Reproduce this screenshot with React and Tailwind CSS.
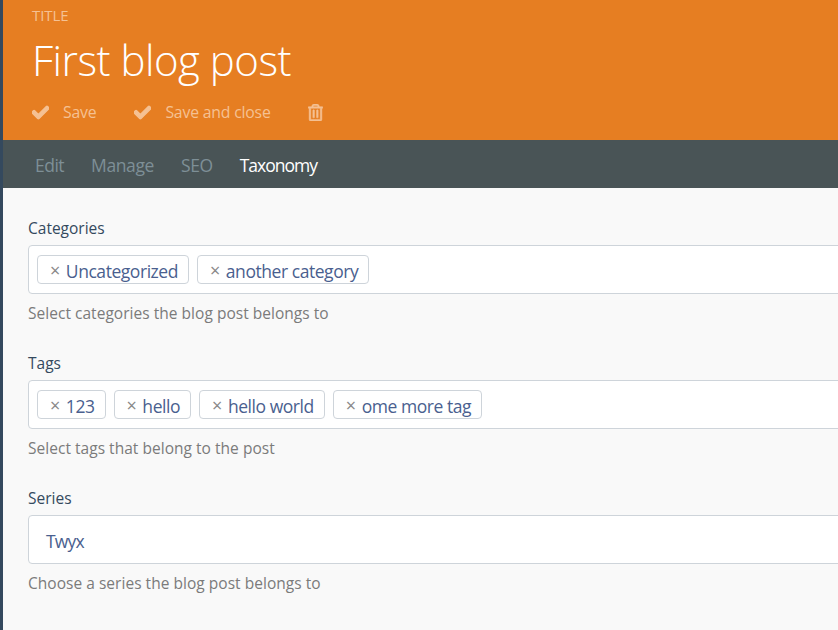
import React from 'react';
import { FaCheck, FaRegTrashAlt } from 'react-icons/fa';

const sans = { fontFamily: '"Open Sans", "Noto Sans", sans-serif' };

function Tag({ children }) {
  return (
    <span className="flex h-[29px] items-center rounded-[4px] border border-[#ced4da] bg-white pl-[12px] pr-[10px] text-[17.5px] tracking-[-0.45px] text-[#4a5f8f]">
      <span className="mr-[6px] pt-[1px] text-[18px] leading-none text-[#888888]">×</span>
      <span className="pt-[3px]">{children}</span>
    </span>
  );
}

function Field({ label, help, children, className }) {
  return (
    <div className={className}>
      <div className="h-[17px] text-[15.5px] leading-[17px] text-[#34495e]">{label}</div>
      <div className="mt-[8px] flex h-[49px] w-[830px] items-center gap-[8px] rounded-[4px] border border-[#ced4da] bg-white pl-[8px]">
        {children}
      </div>
      <div className="mt-[9px] text-[15.5px] leading-[20px] tracking-[0.03px] text-[#7b7b7b]">{help}</div>
    </div>
  );
}

export default function App() {
  return (
    <div className="flex h-[630px] w-[838px] overflow-hidden bg-[#34495e] pl-[3px]" style={sans}>
      <div className="flex min-w-0 flex-1 flex-col bg-[#f9f9f9]">
        <div className="h-[140px] bg-[#e67e22] pl-[29px]">
          <div className="pt-[7px] text-[15px] leading-[17px] tracking-[-0.1px] text-[#f5c193]">TITLE</div>
          <h1 className="mt-[10px] text-[42px] font-light leading-[52px] tracking-[-0.5px] text-white">First blog post</h1>
          <div className="mt-[15px] flex items-center text-[15.8px] tracking-[-0.2px] text-[#f5c193]">
            <FaCheck className="h-[17px] w-[17px]" stroke="currentColor" strokeWidth="40" />
            <span className="ml-[14px]">Save</span>
            <FaCheck className="ml-[38px] h-[17px] w-[17px]" stroke="currentColor" strokeWidth="40" />
            <span className="ml-[14px]">Save and close</span>
            <FaRegTrashAlt className="ml-[37px] h-[17px] w-[15px]" stroke="currentColor" strokeWidth="15" />
          </div>
        </div>
        <div className="flex h-[48px] items-center gap-[27px] bg-[#495456] pl-[32px] pt-[2px] text-[17.5px] tracking-[-0.4px] text-[#7e8f96]">
          <span className="tracking-[-0.5px]">Edit</span>
          <span>Manage</span>
          <span>SEO</span>
          <span className="tracking-[-1px] text-white">Taxonomy</span>
        </div>
        <div className="pl-[25px] pt-[32px]">
          <Field label="Categories" help="Select categories the blog post belongs to">
            <Tag>Uncategorized</Tag>
            <Tag>another category</Tag>
          </Field>
          <Field className="mt-[32px]" label="Tags" help="Select tags that belong to the post">
            <Tag>123</Tag>
            <Tag>hello</Tag>
            <Tag>hello world</Tag>
            <Tag>ome more tag</Tag>
          </Field>
          <Field className="mt-[32px]" label="Series" help="Choose a series the blog post belongs to">
            <span className="pl-[9px] pt-[3px] text-[17.5px] tracking-[-0.8px] text-[#4a5f8f]">Twyx</span>
          </Field>
        </div>
      </div>
    </div>
  );
}
